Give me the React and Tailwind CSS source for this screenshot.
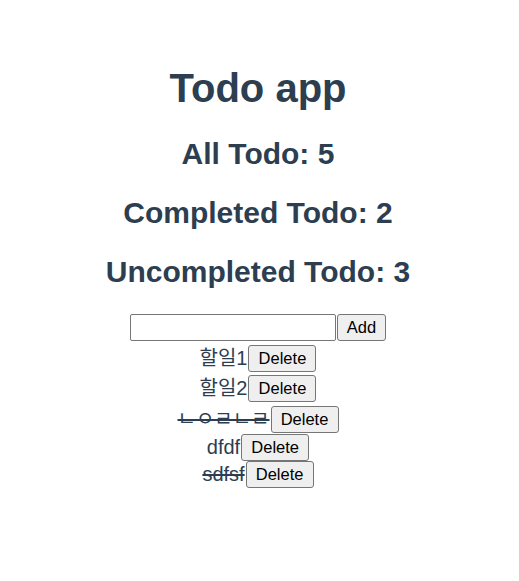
import React from "react";

const todos = [
  { text: "할일1", done: false, h: "h-[31px]" },
  { text: "할일2", done: false, h: "h-[30px]" },
  { text: "ㄴㅇㄹㄴㄹ", done: true, h: "h-[31px]" },
  { text: "dfdf", done: false, h: "h-[28px]" },
  { text: "sdfsf", done: true, h: "h-[27px]" },
];

function Btn({ children, w }) {
  return (
    <button
      className={`${w} h-[27px] shrink-0 border border-[#767676] rounded-[3px] bg-[#efefef] text-black text-[16.5px] leading-none flex items-center justify-center font-['Liberation_Sans',sans-serif]`}
    >
      {children}
    </button>
  );
}

export default function App() {
  return (
    <div className="min-h-[581px] bg-white flex flex-col items-center pt-[65px] pr-[3px] text-[#2c3e50] font-['Liberation_Sans','Noto_Sans_CJK_KR',sans-serif]">
      <h1 className="text-[40px] leading-[46px] font-bold">Todo app</h1>
      <div className="mt-[25.5px] flex flex-col items-center gap-[24.5px]">
        <h2 className="text-[30px] leading-[34.5px] font-bold">All Todo: 5</h2>
        <h2 className="text-[30px] leading-[34.5px] font-bold">Completed Todo: 2</h2>
        <h2 className="text-[30px] leading-[34.5px] font-bold">Uncompleted Todo: 3</h2>
      </div>
      <div className="mt-[24.5px] flex items-center">
        <input
          type="text"
          className="w-[206px] h-[27px] border border-[#767676] rounded-[2px] bg-white outline-none"
        />
        <div className="ml-[1px]">
          <Btn w="w-[49px]">Add</Btn>
        </div>
      </div>
      <div className="flex flex-col items-center">
        {todos.map((t, i) => (
          <div key={i} className={`${t.h} flex items-end justify-center`}>
            <span
              className={`text-[20px] leading-[24px] pb-[2px] whitespace-nowrap ${
                t.done ? "line-through" : ""
              }`}
            >
              {t.text}
            </span>
            <div className="ml-[1px]">
              <Btn w="w-[68px]">Delete</Btn>
            </div>
          </div>
        ))}
      </div>
    </div>
  );
}
